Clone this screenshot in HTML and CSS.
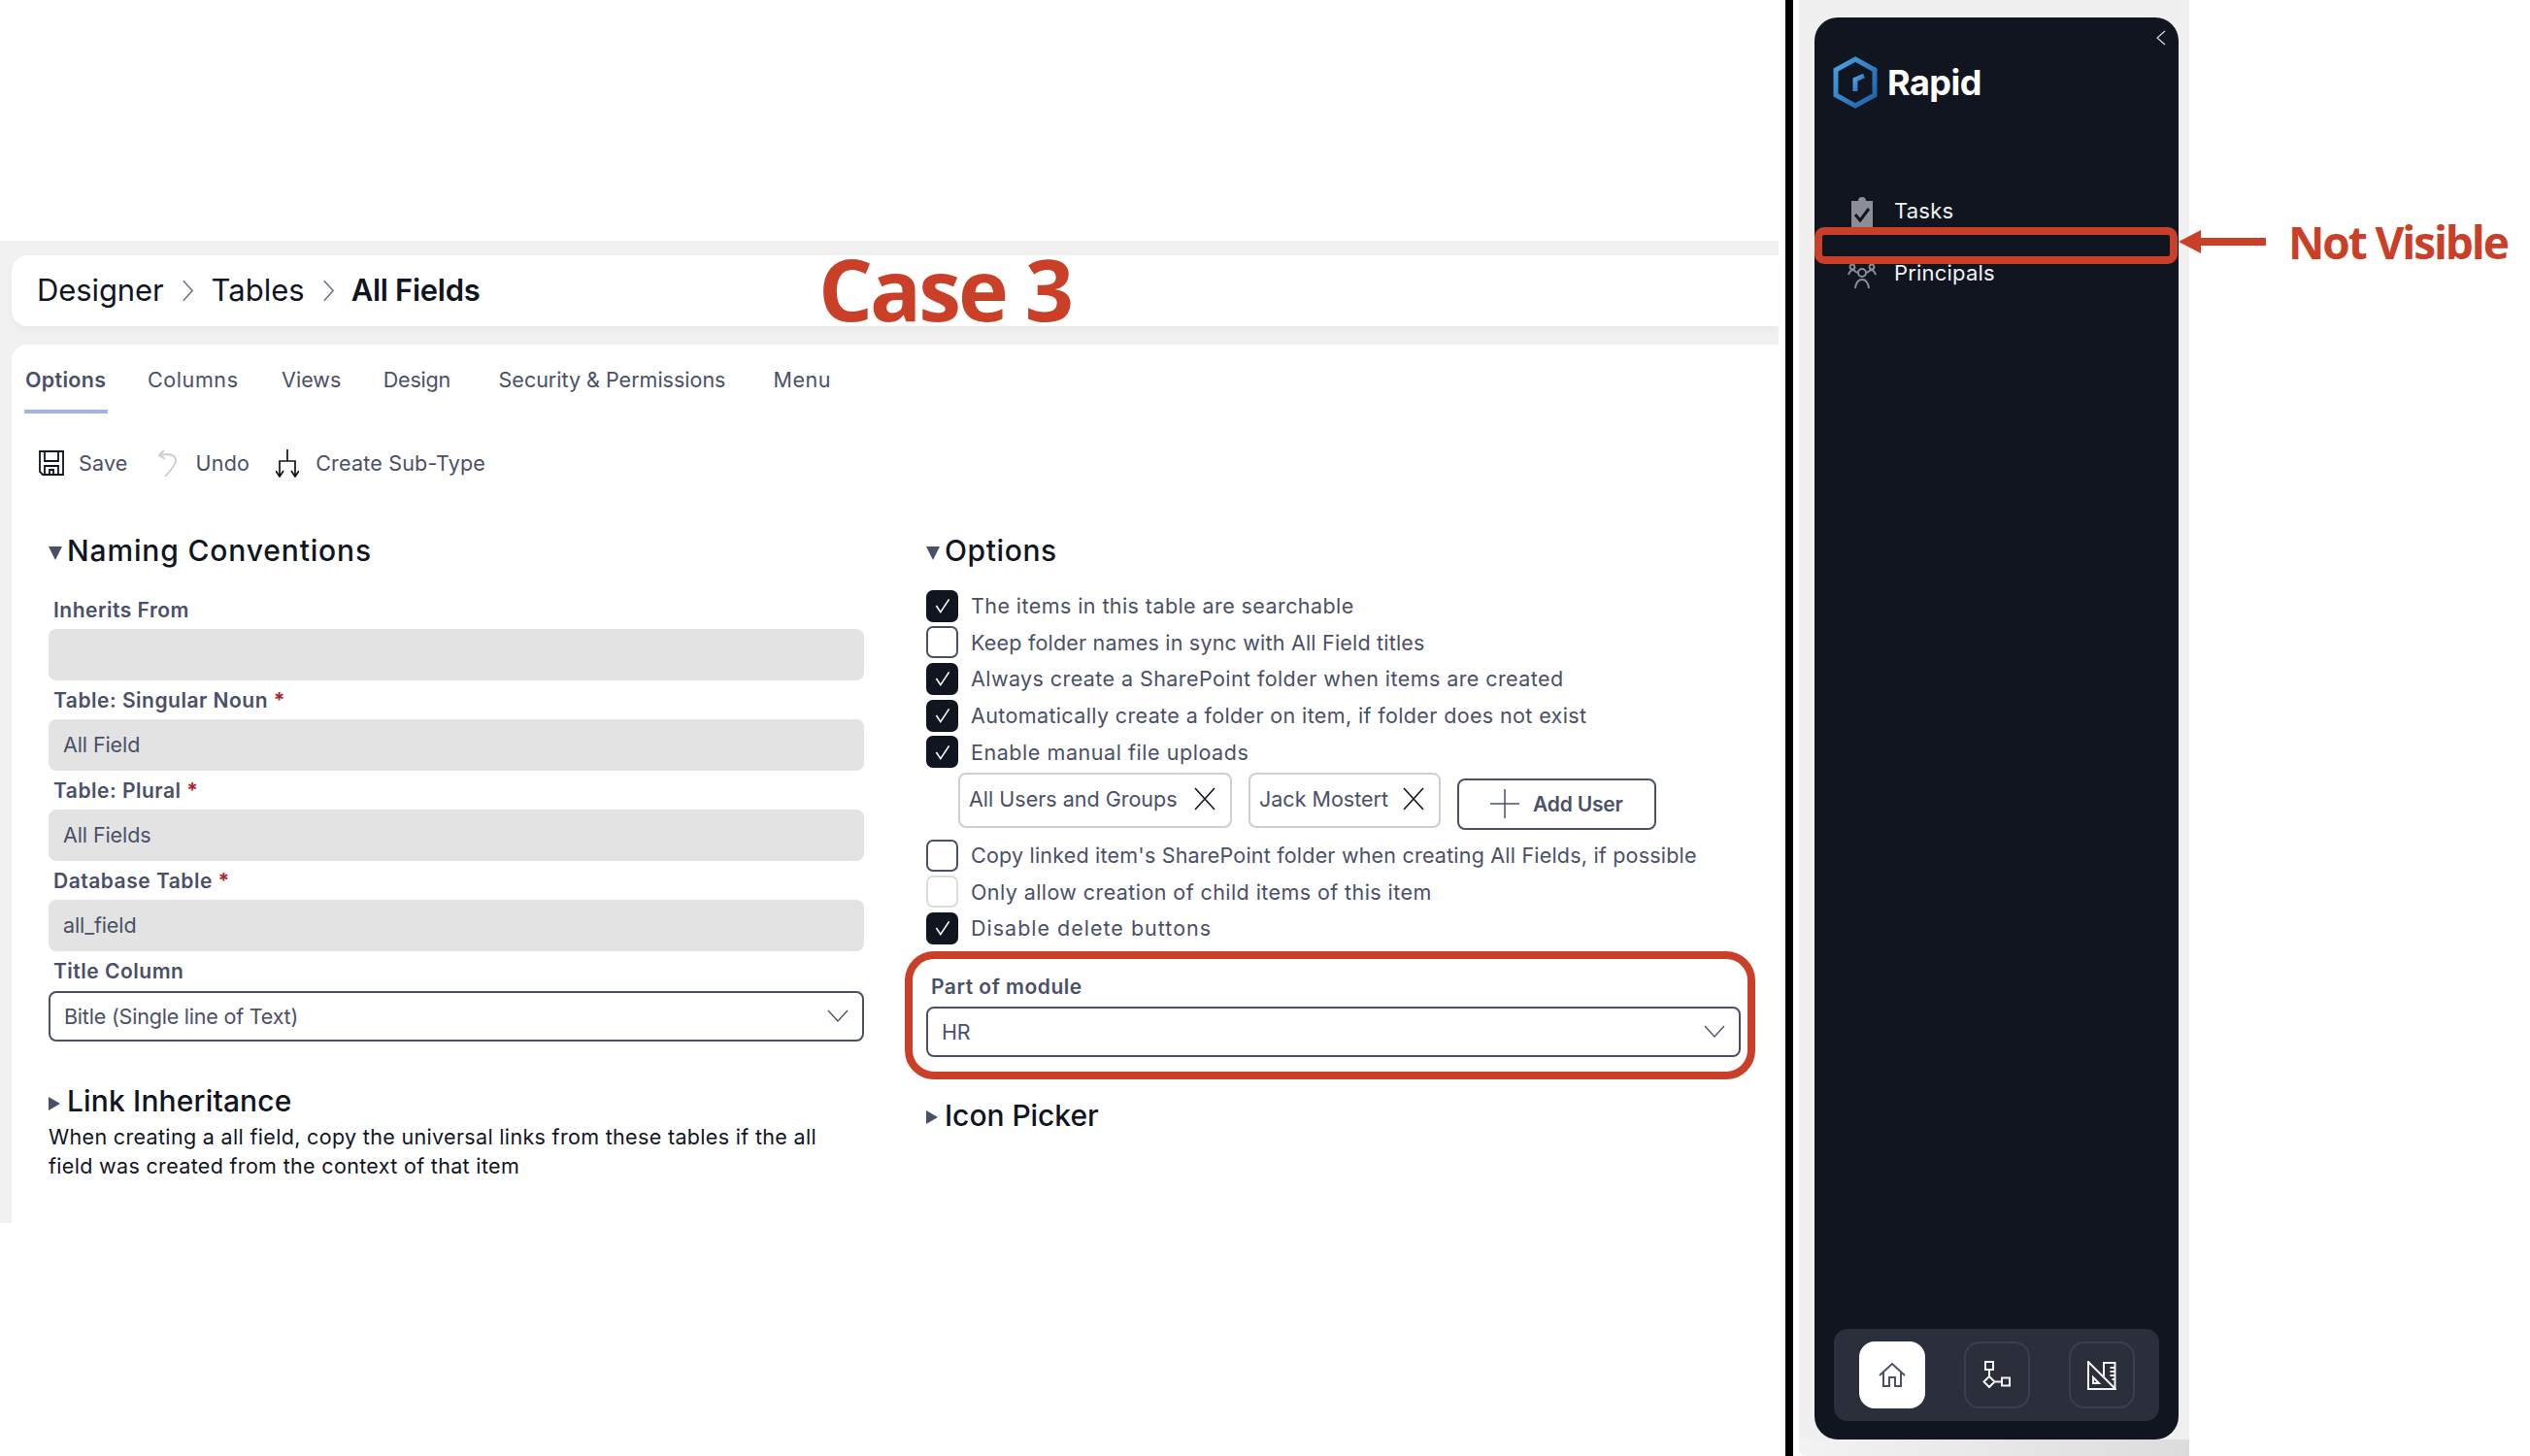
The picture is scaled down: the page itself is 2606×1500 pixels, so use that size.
FILE: index.html
```html
<!DOCTYPE html>
<html lang="en">
<head>
<meta charset="utf-8">
<title>Rapid Designer - All Fields</title>
<link rel="stylesheet" href="styles.css">
</head>
<body>
<div class="page">
  <main class="designer">
    <div class="surface">
      <nav class="crumbs">
        <span class="crumb c-first">Designer</span>
        <svg class="crumb-sep" viewBox="0 0 14 26"><path d="M2 2l10 11L2 24"/></svg>
        <span class="crumb">Tables</span>
        <svg class="crumb-sep" viewBox="0 0 14 26"><path d="M2 2l10 11L2 24"/></svg>
        <span class="crumb current">All Fields</span>
      </nav>
      <section class="panel">
        <div class="tabs">
          <span class="tab active">Options</span>
          <span class="tab t-columns">Columns</span>
          <span class="tab t-views">Views</span>
          <span class="tab t-design">Design</span>
          <span class="tab t-security">Security &amp; Permissions</span>
          <span class="tab t-menu">Menu</span>
        </div>
        <div class="toolbar">
          <span class="tool t-save">
            <svg class="tool-icon" viewBox="1 1 26 26"><path d="M2 2h24v24H5l-3-3z"/><path d="M7 2v10h14V2M7 26V17h14v9M12 26v-5h4v5" /></svg>
            Save
          </span>
          <span class="tool t-undo">
            <svg class="tool-icon disabled" viewBox="0 0 22 28"><path d="M6 1L1 6l6 4M1 6c6-1 12-2 15 1 5 5 0 11-9 21"/></svg>
            Undo
          </span>
          <span class="tool t-sub">
            <svg class="tool-icon" viewBox="0 0 24 29"><path d="M12 0v12M4 28V12h16v16M0 22l4 6 4-6M16 22l4 6 4-6"/></svg>
            Create Sub-Type
          </span>
        </div>
        <div class="columns">
          <div class="col col-left">
            <h2 class="section-title s-naming"><span class="tri-down"></span>Naming Conventions</h2>
            <div class="fields">
              <label class="field-label">Inherits From</label>
              <div class="input"></div>
              <label class="field-label">Table: Singular Noun <b class="req">*</b></label>
              <div class="input">All Field</div>
              <label class="field-label">Table: Plural <b class="req">*</b></label>
              <div class="input">All Fields</div>
              <label class="field-label">Database Table <b class="req">*</b></label>
              <div class="input">all_field</div>
              <label class="field-label">Title Column</label>
              <div class="select title-select">Bitle (Single line of Text)
                <svg class="chev" viewBox="0 0 22 14"><path d="M1 1l10 11L21 1"/></svg>
              </div>
            </div>
            <h2 class="section-title link-title"><span class="tri-right"></span>Link Inheritance</h2>
            <p class="desc">When creating a all field, copy the universal links from these tables if the all field was created from the context of that item</p>
          </div>
          <div class="col col-right">
            <h2 class="section-title s-options"><span class="tri-down"></span>Options</h2>
            <div class="checks">
              <div class="check-row"><span class="box on"><svg viewBox="0 0 20 20"><path d="M4 10l4 6 8-12"/></svg></span>The items in this table are searchable</div>
              <div class="check-row r-keep"><span class="box"></span>Keep folder names in sync with All Field titles</div>
              <div class="check-row"><span class="box on"><svg viewBox="0 0 20 20"><path d="M4 10l4 6 8-12"/></svg></span>Always create a SharePoint folder when items are created</div>
              <div class="check-row r-auto"><span class="box on"><svg viewBox="0 0 20 20"><path d="M4 10l4 6 8-12"/></svg></span>Automatically create a folder on item, if folder does not exist</div>
              <div class="check-row r-enable"><span class="box on"><svg viewBox="0 0 20 20"><path d="M4 10l4 6 8-12"/></svg></span>Enable manual file uploads</div>
              <div class="chips">
                <span class="chip c-all">All Users and Groups<svg viewBox="0 0 24 24"><path d="M2 1l20 22M22 1L2 23"/></svg></span>
                <span class="chip c-jack">Jack Mostert<svg viewBox="0 0 24 24"><path d="M2 1l20 22M22 1L2 23"/></svg></span>
                <span class="add-user"><svg viewBox="0 0 30 30"><path d="M15 0v30M0 15h30"/></svg>Add User</span>
              </div>
              <div class="check-row r-copy"><span class="box"></span>Copy linked item's SharePoint folder when creating All Fields, if possible</div>
              <div class="check-row"><span class="box disabled"></span>Only allow creation of child items of this item</div>
              <div class="check-row r-disable"><span class="box on"><svg viewBox="0 0 20 20"><path d="M4 10l4 6 8-12"/></svg></span>Disable delete buttons</div>
            </div>
            <div class="module">
              <label class="field-label">Part of module</label>
              <div class="select">HR
                <svg class="chev" viewBox="0 0 22 14"><path d="M1 1l10 11L21 1"/></svg>
              </div>
            </div>
            <h2 class="section-title icon-title"><span class="tri-right"></span>Icon Picker</h2>
          </div>
        </div>
      </section>
    </div>
    <div class="case-label">Case 3</div>
  </main>

  <div class="divider"></div>

  <aside class="shell">
    <div class="sidebar">
      <svg class="collapse" viewBox="0 0 10 16"><path d="M9 1L1 8l8 7"/></svg>
      <div class="brand">
        <svg class="logo" viewBox="0 0 46 54">
          <defs>
            <linearGradient id="hex" x1="0" y1="0" x2="1" y2="1">
              <stop offset="0" stop-color="#4aa3e0"/>
              <stop offset="1" stop-color="#1f5da8"/>
            </linearGradient>
          </defs>
          <path d="M23 3l20 11v26L23 51 3 40V14z" fill="none" stroke="url(#hex)" stroke-width="5"/>
          <path d="M23 36V24l9-4" fill="none" stroke="url(#hex)" stroke-width="5"/>
        </svg>
        <span class="brand-name">Rapid</span>
      </div>
      <div class="nav-list">
        <div class="nav-item">
          <svg class="nav-icon" viewBox="0 0 24 31">
            <path d="M1 4h7a4 4 0 0 1 8 0h7v27H1z" fill="#8b8e97"/>
            <path d="M5 18l5 6 9-12" fill="none" stroke="#10151f" stroke-width="3"/>
          </svg>
          Tasks
        </div>
        <div class="nav-item principals">
          <svg class="nav-icon" viewBox="0 0 30 26">
            <g fill="none" stroke="#8b8e97" stroke-width="2">
              <circle cx="15" cy="9" r="4"/><path d="M8 25c1-7 4-9 7-9s6 2 7 9"/>
              <circle cx="5" cy="3" r="2.4"/><circle cx="25" cy="3" r="2.4"/>
              <path d="M1 11c1-3 3-5 5-5l4 3M29 11c-1-3-3-5-5-5l-4 3"/>
            </g>
          </svg>
          Principals
        </div>
      </div>
      <div class="dock">
        <span class="dock-btn active">
          <svg viewBox="0 0 28 28"><path d="M1 14L14 2l13 12M5 11v14h6v-9h6v9h6V11"/></svg>
        </span>
        <span class="dock-btn">
          <svg viewBox="0 0 30 30"><path d="M3 1h8v8H3zM7 9v7M7 16l5.500 5.500L7 27l-5.500-5.500zM12.500 21.500H20M20 17.500h8v8h-8z"/></svg>
        </span>
        <span class="dock-btn">
          <svg viewBox="0 0 30 30"><path d="M1 1l28 28H1zM6 23v-6l6 6zM17 16V2h11.500v27M28.500 7h-5M28.500 11h-5M28.500 15h-5M28.500 19h-3"/></svg>
        </span>
      </div>
    </div>
    <div class="not-visible-box"></div>
  </aside>

  <div class="annotation">
    <svg class="arrow" viewBox="0 0 90 24"><path d="M0 12L23 0v8h67v8H23v8z"/></svg>
    <span class="annotation-text">Not Visible</span>
  </div>
</div>
</body>
</html>
```

FILE: styles.css
```css
* { box-sizing: border-box; }
html, body { margin: 0; padding: 0; background: #fff; }
body { font-family: "Inter", "Noto Sans", "Liberation Sans", sans-serif; color: #4a5068; }
.page { position: relative; display: flex; width: 2606px; height: 1500px; overflow: hidden; background: #fff; }

/* Left application window */
.designer { position: relative; width: 1839px; padding-top: 248px; flex: none; }
.surface { width: 1832px; height: 1012px; padding: 15px 0 0 12px; background: #f1f1f1; }
.crumbs { display: flex; align-items: center; height: 73px; margin: 0 0 19px; padding: 0 0 2px 26px; background: #fff; border-radius: 16px 0 0 16px; box-shadow: 0 4px 10px rgba(0,0,0,.04); font-size: 31px; color: #10151f; }
.c-first { letter-spacing: -.1px; }
.crumb-sep { width: 13px; height: 25px; margin: 2px 18px 0 18px; fill: none; stroke: #6c7080; stroke-width: 1.6; }
.current { font-weight: 600; letter-spacing: -.3px; margin-left: -1px; }
.panel { height: 905px; background: #fff; border-radius: 16px 0 0 0; }

.tabs { display: flex; height: 71px; padding: 18px 0 0 13px; font-size: 21.500px; line-height: 36px; }
.tab { display: block; height: 53px; padding: 0 1px; white-space: nowrap; }
.tab.active { width: 86px; font-weight: 600; border-bottom: 4px solid #a6b3dd; letter-spacing: .3px; }
.t-columns { margin-left: 40px; letter-spacing: .6px; }
.t-views { margin-left: 42.500px; }
.t-design { margin-left: 41.500px; letter-spacing: -.2px; }
.t-security { margin-left: 47.500px; }
.t-menu { margin-left: 47px; letter-spacing: .5px; }

.toolbar { display: flex; align-items: center; height: 32px; margin-top: 35px; padding-left: 28px; font-size: 21.500px; white-space: nowrap; }
.tool { display: flex; align-items: center; letter-spacing: .2px; }
.tool-icon { width: 26px; height: 26px; margin-right: 15px; fill: none; stroke: #10151f; stroke-width: 1.800; }
.t-undo .tool-icon { width: 22px; height: 28px; margin-right: 17px; stroke: #cfd0d2; stroke-width: 2; }
.t-sub .tool-icon { width: 24px; height: 29px; margin-right: 17px; stroke-width: 1.700; }
.t-undo { margin-left: 31px; }
.t-sub { margin-left: 27px; }

.columns { display: flex; padding: 52px 0 0 38px; }
.col-left { width: 840px; flex: none; }
.col-right { width: 839px; margin-left: 64px; flex: none; }

.section-title { display: flex; align-items: center; height: 44px; margin: 0; font-size: 30px; font-weight: 500; color: #10151f; letter-spacing: .15px; white-space: nowrap; }
.s-naming { letter-spacing: .85px; }
.s-options { letter-spacing: .6px; }
.tri-down { width: 0; height: 0; margin: 5px 5px 0 0; border: solid transparent; border-width: 14px 7px 0; border-top-color: #4a5068; }
.tri-right { width: 0; height: 0; margin: 5px 7px 0 0; border: solid transparent; border-width: 7px 0 7px 12px; border-left-color: #4a5068; }

.fields { padding-top: 19px; }
.field-label { display: block; height: 40px; padding: 6px 0 0 5px; font-size: 21px; line-height: 30px; font-weight: 600; letter-spacing: .5px; white-space: nowrap; }
.req { color: #a6282c; font-weight: 700; }
.input { height: 53px; padding-left: 15px; background: #e3e3e3; border-radius: 8px; font-size: 21.500px; line-height: 53px; letter-spacing: -.1px; }
.select { display: flex; align-items: center; justify-content: space-between; height: 52px; padding: 0 14px 0 14px; background: #fff; border: 2px solid #4a5068; border-radius: 8px; font-size: 21.500px; letter-spacing: -.2px; }
.title-select { margin-top: 1px; }
.chev { width: 22px; height: 14px; fill: none; stroke: #4a5068; stroke-width: 1.300; }

.link-title { margin-top: 39px; }
.desc { width: 820px; margin: 0; font-size: 21.500px; line-height: 30px; color: #10151f; letter-spacing: .33px; }

.checks { padding-top: 17px; }
.check-row { display: flex; align-items: center; height: 37.600px; padding-bottom: 1px; font-size: 21.500px; white-space: nowrap; letter-spacing: .42px; }
.r-keep { letter-spacing: .2px; }
.r-auto { letter-spacing: .37px; }
.r-enable { letter-spacing: .55px; }
.r-copy { letter-spacing: .2px; }
.r-disable { letter-spacing: 1px; }
.box { display: flex; align-items: center; justify-content: center; width: 33px; height: 33px; margin-right: 13px; flex: none; background: #fff; border: 2px solid #4a5068; border-radius: 7px; }
.box.on { background: #10151f; border-color: #10151f; }
.box.disabled { border-color: #dcdcdc; }
.box svg { width: 22px; height: 22px; fill: none; stroke: #fff; stroke-width: 1.500; }

.chips { display: flex; align-items: flex-start; height: 67px; margin-top: 2px; padding-left: 33px; }
.chip { display: flex; align-items: center; justify-content: space-between; height: 57px; padding: 0 14px 2px 9px; background: #fff; border: 2px solid #cfcfcf; border-radius: 8px; font-size: 21.500px; white-space: nowrap; }
.c-all { width: 282px; }
.c-jack { width: 198px; margin-left: 17px; }
.chip svg { width: 24px; height: 24px; fill: none; stroke: #10151f; stroke-width: 1.600; }
.add-user { display: flex; align-items: center; width: 205px; height: 53px; margin: 6px 0 0 17px; padding-left: 32px; border: 2px solid #4a5068; border-radius: 8px; font-size: 21px; font-weight: 600; white-space: nowrap; letter-spacing: -.2px; }
.add-user svg { width: 30px; height: 30px; margin-right: 14px; fill: none; stroke: #4a5068; stroke-width: 1.500; }

.module { position: relative; height: 132px; margin-top: 4px; padding-top: 16px; }
.module::before { content: ""; position: absolute; left: -22px; right: -15px; top: 0; bottom: 0; border: 8px solid #c93f28; border-radius: 30px; }
.module .field-label { height: 41px; }
.icon-title { margin-top: 15px; letter-spacing: -.05px; }

/* Red case annotation */
.case-label { position: absolute; left: 843px; top: 235px; font-family: "Open Sans", "Liberation Sans", sans-serif; font-size: 88px; line-height: 125px; font-weight: 700; letter-spacing: -3px; color: #c93f28; white-space: nowrap; }

.divider { width: 8px; height: 1500px; flex: none; background: #000; }

/* Sidebar window */
.shell { position: relative; width: 402px; height: 1500px; margin-left: 6px; padding: 18px 0 0 16px; flex: none; background: linear-gradient(to right, #f3f3f3, #dcdcdc) left bottom / 100% 17px no-repeat, #f0f0f0; border-radius: 0 0 0 8px; }
.sidebar { position: relative; display: flex; flex-direction: column; width: 375px; height: 1465px; background: #10151f; border-radius: 24px; color: #f2f2f2; }
.collapse { position: absolute; right: 13px; top: 13px; width: 10px; height: 16px; fill: none; stroke: #d8d8d8; stroke-width: 1.200; }
.brand { display: flex; align-items: center; height: 54px; margin: 40px 0 0 19px; }
.logo { width: 46px; height: 54px; flex: none; }
.brand-name { margin-left: 10px; font-size: 36px; font-weight: 700; color: #fff; letter-spacing: -.5px; }
.nav-list { margin-top: 89px; }
.nav-item { display: flex; align-items: center; height: 32px; padding-left: 37px; font-size: 22px; letter-spacing: .2px; }
.nav-icon { align-self: flex-start; width: 24px; height: 31px; margin: 2px 21px 0 0; flex: none; }
.principals { margin-top: 32px; padding-left: 34px; }
.principals .nav-icon { width: 30px; height: 26px; margin: 7px 18px 0 0; }
.dock { display: flex; align-items: center; width: 335px; height: 95px; margin: auto 0 19px 20px; padding-left: 26px; background: #2a2f3b; border-radius: 14px; }
.dock-btn { display: flex; align-items: center; justify-content: center; width: 68px; height: 69px; margin-right: 40px; flex: none; border: 2px solid #3b404c; border-radius: 16px; }
.dock-btn:last-child { margin-right: 0; }
.dock-btn.active { background: #fff; border-color: #fff; }
.dock-btn svg { width: 30px; height: 30px; fill: none; stroke: #f4f4f4; stroke-width: 2; }
.dock-btn.active svg { width: 28px; height: 28px; stroke: #4a5068; }
.not-visible-box { position: absolute; left: 16px; top: 234px; width: 374px; height: 38px; border: 8px solid #c93f28; border-radius: 10px; }

.annotation { position: absolute; left: 2244px; top: 217px; display: flex; align-items: center; height: 64px; }
.arrow { width: 90px; height: 24px; fill: #c93f28; }
.annotation-text { margin-left: 23px; font-family: "Open Sans", "Liberation Sans", sans-serif; font-size: 46px; font-weight: 700; color: #c93f28; white-space: nowrap; letter-spacing: -2.100px; }
```
